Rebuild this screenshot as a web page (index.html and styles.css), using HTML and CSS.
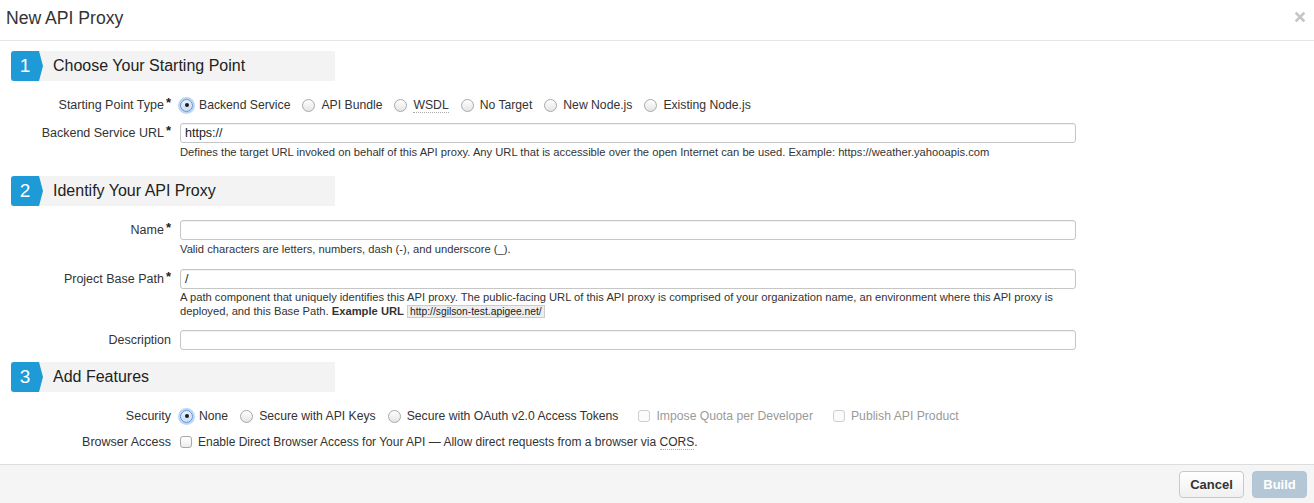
FILE: index.html
```html
<!DOCTYPE html>
<html lang="en">
<head>
<meta charset="utf-8">
<title>New API Proxy</title>
<link rel="stylesheet" href="styles.css">
</head>
<body>
<div class="modal">
  <header class="modal-header">
    <h1 class="modal-title">New API Proxy</h1>
    <button class="close" type="button" aria-label="Close">
      <svg width="10" height="10" viewBox="0 0 10 10"><path d="M1.5 1.5L8.5 8.5M8.5 1.5L1.5 8.5" stroke="#c6c6c6" stroke-width="2.6" stroke-linecap="square"/></svg>
    </button>
  </header>

  <main class="modal-body">
    <section class="step step-1">
      <div class="step-head"><span class="badge">1</span><h2 class="step-title">Choose Your Starting Point</h2></div>

      <div class="row row-first">
        <div class="label">Starting Point Type<span class="req">*</span></div>
        <div class="control options">
          <label class="opt"><span class="radio on"></span><span>Backend Service</span></label>
          <label class="opt"><span class="radio"></span><span>API Bundle</span></label>
          <label class="opt"><span class="radio"></span><span><abbr class="dotted">WSDL</abbr></span></label>
          <label class="opt"><span class="radio"></span><span>No Target</span></label>
          <label class="opt"><span class="radio"></span><span>New Node.js</span></label>
          <label class="opt"><span class="radio"></span><span>Existing Node.js</span></label>
        </div>
      </div>

      <div class="row row-url">
        <div class="label">Backend Service URL<span class="req">*</span></div>
        <div class="control">
          <div class="input">https://</div>
          <p class="help">Defines the target URL invoked on behalf of this API proxy. Any URL that is accessible over the open Internet can be used. Example: https://weather.yahooapis.com</p>
        </div>
      </div>
    </section>

    <section class="step step-2">
      <div class="step-head"><span class="badge">2</span><h2 class="step-title">Identify Your API Proxy</h2></div>

      <div class="row row-first">
        <div class="label">Name<span class="req">*</span></div>
        <div class="control">
          <div class="input"></div>
          <p class="help">Valid characters are letters, numbers, dash (-), and underscore (_).</p>
        </div>
      </div>

      <div class="row row-path">
        <div class="label">Project Base Path<span class="req">*</span></div>
        <div class="control">
          <div class="input">/</div>
          <p class="help help-multi">A path component that uniquely identifies this API proxy. The public-facing URL of this API proxy is comprised of your organization name, an environment where this API proxy is deployed, and this Base Path. <b>Example URL</b> <code class="url">http://sgilson-test.apigee.net/</code></p>
        </div>
      </div>

      <div class="row row-desc">
        <div class="label">Description</div>
        <div class="control">
          <div class="input"></div>
        </div>
      </div>
    </section>

    <section class="step step-3">
      <div class="step-head"><span class="badge">3</span><h2 class="step-title">Add Features</h2></div>

      <div class="row row-first">
        <div class="label">Security</div>
        <div class="control options">
          <label class="opt"><span class="radio on"></span><span>None</span></label>
          <label class="opt"><span class="radio"></span><span>Secure with API Keys</span></label>
          <label class="opt"><span class="radio"></span><span>Secure with OAuth v2.0 Access Tokens</span></label>
          <label class="opt opt-check disabled"><span class="check"></span><span>Impose Quota per Developer</span></label>
          <label class="opt opt-check disabled"><span class="check"></span><span>Publish API Product</span></label>
        </div>
      </div>

      <div class="row row-browser">
        <div class="label">Browser Access</div>
        <div class="control options">
          <label class="opt opt-cors"><span class="check"></span><span>Enable Direct Browser Access for Your API — Allow direct requests from a browser via <abbr class="dotted">CORS</abbr>.</span></label>
        </div>
      </div>
    </section>
  </main>

  <footer class="modal-footer">
    <button class="btn btn-cancel" type="button">Cancel</button>
    <button class="btn btn-build" type="button" disabled>Build</button>
  </footer>
</div>
</body>
</html>
```
FILE: styles.css
```css
html, body {
  margin: 0;
  padding: 0;
  background: #fff;
}

body {
  font-family: "Liberation Sans", Arial, sans-serif;
  color: #333;
  font-size: 12.5px;
}

.modal {
  height: 100vh;
  display: flex;
  flex-direction: column;
}

.modal-header {
  height: 40px;
  border-bottom: 1px solid #e5e5e5;
  display: flex;
  justify-content: space-between;
  align-items: flex-start;
  padding: 0 9px 0 6px;
  flex: none;
}

.modal-title {
  margin: 0;
  font-size: 17.6px;
  font-weight: normal;
  line-height: 36px;
  color: #333;
}

.close {
  border: 0;
  background: none;
  padding: 0;
  margin-top: 12px;
  width: 10px;
  height: 10px;
  display: flex;
}

.modal-body {
  flex: 1;
}

.step-head {
  margin-left: 11px;
  width: 324px;
  height: 30px;
  background: #f3f3f3;
  display: flex;
  align-items: center;
}

.step-1 .step-head { margin-top: 10px; }
.step-2 .step-head { margin-top: 17px; }
.step-3 .step-head { margin-top: 12px; }

.badge {
  width: 32px;
  height: 30px;
  box-sizing: border-box;
  padding-right: 4px;
  background: #1e9ad6;
  color: #fff;
  font-size: 19px;
  line-height: 30px;
  text-align: center;
  border-radius: 3px 0 0 3px;
  clip-path: polygon(0 0, 28px 0, 32px 50%, 28px 100%, 0 100%);
  flex: none;
}

.step-title {
  margin: 0 0 0 10px;
  font-size: 16px;
  font-weight: normal;
  color: #222;
}

.row {
  display: flex;
  align-items: flex-start;
}

.row-first { margin-top: 14px; }
.row-url { margin-top: 8px; }
.row-path { margin-top: 13px; }
.row-desc { margin-top: 12px; }
.row-browser { margin-top: 6px; }

.label {
  width: 171px;
  padding-right: 9px;
  text-align: right;
  line-height: 20px;
  height: 20px;
  white-space: nowrap;
  flex: none;
}

.req {
  display: inline-block;
  margin-left: 2px;
  font-size: 13px;
  font-weight: bold;
  line-height: 12px;
  vertical-align: top;
  position: relative;
  top: 2px;
  color: #222;
}

.control {
  width: 896px;
  flex: none;
}

.options {
  display: flex;
  align-items: center;
  height: 20px;
  white-space: nowrap;
  font-size: 12.2px;
}

.opt {
  display: inline-flex;
  align-items: center;
  margin-right: 12px;
}

.opt-cors {
  font-size: 12px;
}

.opt-check {
  margin-left: 8px;
}

.opt.disabled {
  color: #9a9a9a;
}

.radio {
  width: 13px;
  height: 13px;
  box-sizing: border-box;
  border-radius: 50%;
  border: 1px solid #a8a8a8;
  background: linear-gradient(#ffffff, #e4e4e4);
  margin-right: 6px;
  position: relative;
  flex: none;
}

.radio.on {
  border-color: #5a8ed8;
  background: linear-gradient(#eaf2fd, #c9dcf6);
  box-shadow: 0 0 0 2px rgba(110, 160, 230, 0.45);
}

.radio.on::after {
  content: "";
  position: absolute;
  left: 50%;
  top: 50%;
  width: 4px;
  height: 4px;
  margin: -2px 0 0 -2px;
  border-radius: 50%;
  background: #1c1c1c;
}

.check {
  width: 12px;
  height: 12px;
  box-sizing: border-box;
  border-radius: 3px;
  border: 1px solid #a8a8a8;
  background: linear-gradient(#ffffff, #ececec);
  margin-right: 6px;
  flex: none;
}

.disabled .check {
  border-color: #cfcfcf;
  background: #fbfbfb;
}

.dotted {
  text-decoration: none;
  border-bottom: 1px dotted #aaa;
}

.input {
  height: 20px;
  box-sizing: border-box;
  border: 1px solid #c6c6c6;
  border-radius: 3px;
  box-shadow: inset 0 1px 1px rgba(0, 0, 0, 0.06);
  padding: 0 4px;
  line-height: 18px;
  font-size: 12.5px;
  color: #222;
  background: #fff;
}

.help {
  margin: 2px 0 0;
  font-size: 11.2px;
  line-height: 14px;
  color: #333;
}

.help-multi {
  margin-top: 1px;
}

.help b {
  font-weight: bold;
}

.url {
  display: inline-block;
  font-family: "Liberation Sans", Arial, sans-serif;
  font-size: 10.3px;
  line-height: 11px;
  background: #eeeeee;
  border: 1px solid #cccccc;
  padding: 0 2px;
  color: #222;
}

.modal-footer {
  flex: none;
  height: 32px;
  border-top: 1px solid #dddddd;
  background: #f5f5f5;
  display: flex;
  justify-content: flex-end;
  align-items: flex-start;
  padding: 6px 7px 0 0;
  gap: 8px;
}

.btn {
  height: 27px;
  border-radius: 4px;
  font-family: "Liberation Sans", Arial, sans-serif;
  font-size: 13px;
  font-weight: bold;
  padding: 0;
}

.btn-cancel {
  width: 65px;
  border: 1px solid #c9c9c9;
  background: linear-gradient(#ffffff, #f0f0f0);
  color: #333;
}

.btn-build {
  width: 55px;
  border: 1px solid #b2c5d4;
  background: #b4c7d6;
  color: #fff;
}
```
